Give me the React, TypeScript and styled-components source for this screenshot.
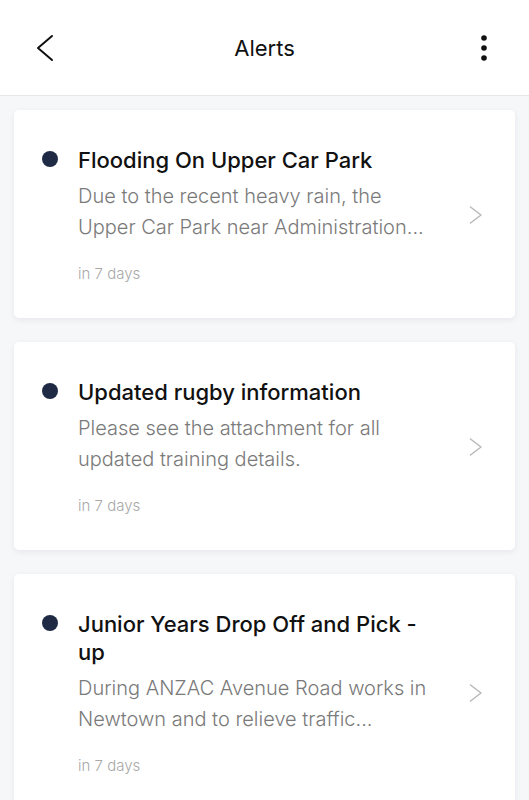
import styled, { createGlobalStyle } from "styled-components";

const GlobalStyle = createGlobalStyle`
  * {
    box-sizing: border-box;
  }
  body {
    margin: 0;
    background: #f6f7f9;
    font-family: Inter, "Noto Sans", sans-serif;
    color: #111;
  }
`;

type Alert = {
  id: number;
  title: string;
  body: string;
  when: string;
};

const alerts: Alert[] = [
  {
    id: 1,
    title: "Flooding On Upper Car Park",
    body: "Due to the recent heavy rain, the Upper Car Park near Administration...",
    when: "in 7 days",
  },
  {
    id: 2,
    title: "Updated rugby information",
    body: "Please see the attachment for all updated training details.",
    when: "in 7 days",
  },
  {
    id: 3,
    title: "Junior Years Drop Off and Pick - up",
    body: "During ANZAC Avenue Road works in Newtown and to relieve traffic...",
    when: "in 7 days",
  },
];

const App = () => {
  return (
    <>
      <GlobalStyle />
      <Page>
        <Header>
          <IconButton aria-label="Back">
            <svg width="20" height="28" viewBox="0 0 20 28">
              <path
                d="M18 2 L4 14 L18 26"
                fill="none"
                stroke="#111"
                strokeWidth="2"
                strokeLinecap="round"
                strokeLinejoin="round"
              />
            </svg>
          </IconButton>
          <Title>Alerts</Title>
          <IconButton aria-label="More" $end>
            <svg width="8" height="28" viewBox="0 0 8 28">
              <circle cx="4" cy="4" r="2.8" fill="#111" />
              <circle cx="4" cy="14" r="2.8" fill="#111" />
              <circle cx="4" cy="24" r="2.8" fill="#111" />
            </svg>
          </IconButton>
        </Header>
        <List>
          {alerts.map((a) => (
            <Card key={a.id}>
              <Dot />
              <Content>
                <CardTitle>{a.title}</CardTitle>
                <Body>{a.body}</Body>
                <When>{a.when}</When>
              </Content>
              <Chevron>
                <svg width="14" height="20" viewBox="0 0 14 20">
                  <path
                    d="M1.5 2 L12 10 L1.5 18"
                    fill="none"
                    stroke="#b8b8b8"
                    strokeWidth="1.5"
                    strokeLinecap="round"
                    strokeLinejoin="round"
                  />
                </svg>
              </Chevron>
            </Card>
          ))}
        </List>
      </Page>
    </>
  );
};

export default App;

const Page = styled.div`
  min-height: 800px;
  overflow: hidden;
`;

const Header = styled.header`
  height: 96px;
  background: #ffffff;
  border-bottom: 1px solid #e6e7ea;
  display: grid;
  grid-template-columns: 1fr auto 1fr;
  align-items: center;
  padding: 0 34px;
`;

const IconButton = styled.div<{ $end?: boolean }>`
  display: flex;
  align-items: center;
  justify-self: ${(p) => (p.$end ? "end" : "start")};
  margin-right: ${(p) => (p.$end ? "7px" : "0")};
  height: 28px;
  svg {
    display: block;
  }
`;

const Title = styled.h1`
  margin: 0;
  font-size: 22px;
  font-weight: 400;
  color: #111;
`;

const List = styled.div`
  display: flex;
  flex-direction: column;
  gap: 24px;
  padding: 14px 14px 0;
`;

const Card = styled.div`
  background: #ffffff;
  border-radius: 5px;
  box-shadow: 0 2px 6px rgba(20, 30, 50, 0.07);
  display: grid;
  grid-template-columns: 16px 352px 1fr;
  column-gap: 20px;
  padding: 36px 33px 34px 28px;
  align-items: start;
`;

const Dot = styled.span`
  width: 16px;
  height: 16px;
  border-radius: 50%;
  background: #1f2a44;
  margin-top: 5px;
`;

const Content = styled.div`
  display: flex;
  flex-direction: column;
`;

const CardTitle = styled.h2`
  margin: 0;
  font-size: 22px;
  line-height: 28px;
  font-weight: 500;
  color: #111;
`;

const Body = styled.p`
  margin: 7px 0 0;
  font-size: 20px;
  line-height: 31px;
  font-weight: 300;
  color: #7a7a7a;
`;

const When = styled.span`
  margin-top: 21px;
  font-size: 15px;
  line-height: 20px;
  font-weight: 300;
  color: #a8a8a8;
`;

const Chevron = styled.div`
  align-self: center;
  justify-self: end;
  display: flex;
  margin-right: -1px;
  svg {
    display: block;
  }
`;
